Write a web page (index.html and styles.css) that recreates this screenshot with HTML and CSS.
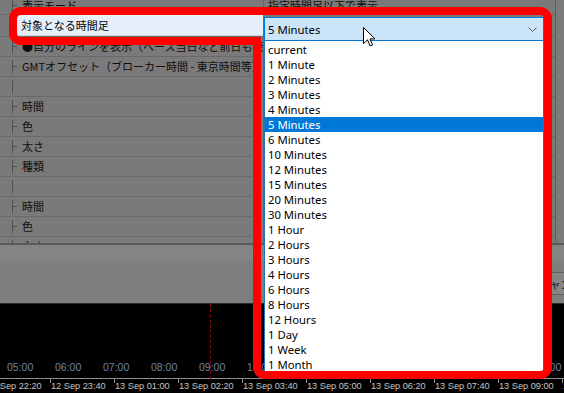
FILE: index.html
```html
<!DOCTYPE html>
<html lang="ja">
<head>
<meta charset="utf-8">
<title>時間足設定</title>
<link rel="stylesheet" href="styles.css">
</head>
<body>
<div class="screen">
  <section class="dialog">
    <div class="grid-area">
      <div class="grid">
        <div class="row row-head">
          <div class="cell-name tee">表示モード</div>
          <div class="cell-value">指定時間足以下で表示</div>
        </div>
        <div class="row row-focus">
          <div class="cell-name"><div class="spot">対象となる時間足</div></div>
          <div class="cell-value"></div>
        </div>
        <div class="row">
          <div class="cell-name tee">●自分のラインを表示（ベース当日など前日も表示）</div>
          <div class="cell-value"></div>
        </div>
        <div class="row">
          <div class="cell-name tee">GMTオフセット（ブローカー時間 - 東京時間等）</div>
          <div class="cell-value"></div>
        </div>
        <div class="row"><div class="cell-name pipe"></div><div class="cell-value"></div></div>
        <div class="row"><div class="cell-name tee">時間</div><div class="cell-value"></div></div>
        <div class="row"><div class="cell-name tee">色</div><div class="cell-value"></div></div>
        <div class="row"><div class="cell-name tee">太さ</div><div class="cell-value"></div></div>
        <div class="row"><div class="cell-name tee">種類</div><div class="cell-value"></div></div>
        <div class="row"><div class="cell-name pipe"></div><div class="cell-value"></div></div>
        <div class="row"><div class="cell-name tee">時間</div><div class="cell-value"></div></div>
        <div class="row"><div class="cell-name tee">色</div><div class="cell-value"></div></div>
        <div class="row"><div class="cell-name tee">太さ</div><div class="cell-value"></div></div>
      </div>
      <div class="scroll"></div>
    </div>
    <div class="footer">
      <button class="btn" type="button">キャンセル</button>
    </div>
  </section>

  <section class="chart">
    <div class="marker"></div>
    <div class="hours">
      <span>05:00</span><span>06:00</span><span>07:00</span><span>08:00</span>
      <span>09:00</span><span>10:00</span><span>11:00</span><span>12:00</span>
      <span>13:00</span><span>14:00</span><span>15:00</span><span>16:00</span>
    </div>
    <div class="axis">
      <span>12 Sep 22:20</span><span>12 Sep 23:40</span><span>13 Sep 01:00</span>
      <span>13 Sep 02:20</span><span>13 Sep 03:40</span><span>13 Sep 05:00</span>
      <span>13 Sep 06:20</span><span>13 Sep 07:40</span><span>13 Sep 09:00</span>
      <span>13 Sep 10:20</span>
    </div>
  </section>

  <div class="combo">
    <div class="combo-field">
      <span>5 Minutes</span>
      <svg class="chevron" width="9" height="5" viewBox="0 0 9 5"><polyline points="0.5,0.5 4.5,4.5 8.5,0.5" fill="none" stroke="#5a5a5a" stroke-width="1"/></svg>
    </div>
    <ul class="combo-list">
      <li>current</li>
      <li>1 Minute</li>
      <li>2 Minutes</li>
      <li>3 Minutes</li>
      <li>4 Minutes</li>
      <li class="selected">5 Minutes</li>
      <li>6 Minutes</li>
      <li>10 Minutes</li>
      <li>12 Minutes</li>
      <li>15 Minutes</li>
      <li>20 Minutes</li>
      <li>30 Minutes</li>
      <li>1 Hour</li>
      <li>2 Hours</li>
      <li>3 Hours</li>
      <li>4 Hours</li>
      <li>6 Hours</li>
      <li>8 Hours</li>
      <li>12 Hours</li>
      <li>1 Day</li>
      <li>1 Week</li>
      <li>1 Month</li>
    </ul>
  </div>

  <svg class="frame" width="564" height="393" viewBox="0 0 564 393">
    <path d="M13 19 A8 8 0 0 1 21 11 L540 11 A8 8 0 0 1 548 19 L548 367 A8 8 0 0 1 540 375 L265 375 A8 8 0 0 1 257 367 L257 41 L21 41 A8 8 0 0 1 13 33 Z" fill="none" stroke="#ff0000" stroke-width="8" stroke-linejoin="miter"/>
  </svg>

  <svg class="cursor" width="13" height="21" viewBox="0 0 13 21">
    <path d="M0.5 0.5 L0.5 16.5 L4.5 12.8 L7.2 19 L9.6 18 L7 11.9 L12 11.9 Z" fill="#ffffff" stroke="#000000" stroke-width="1" stroke-linejoin="miter"/>
  </svg>
</div>
</body>
</html>
```
FILE: styles.css
```css
* { box-sizing: border-box; }

html, body {
  margin: 0;
  padding: 0;
  background: #000;
}

.screen {
  width: 564px;
  height: 393px;
  position: relative;
  overflow: hidden;
}

/* ---------- dimmed dialog ---------- */
.dialog {
  height: 303px;
  display: flex;
  flex-direction: column;
  background: #7e7e7e;
}

.grid-area {
  height: 245px;
  flex: none;
  display: flex;
  overflow: hidden;
  background: #7a7a7a;
  border-bottom: 2px solid #5a5a5a;
}

.grid {
  width: 556px;
  flex: none;
  margin-top: -3px;
  border-right: 1px solid #5e5e5e;
}

.scroll {
  flex: 1;
  background: #7c7c7c;
}

.row {
  display: flex;
  height: 20px;
  border-bottom: 1px solid #6a6a6a;
  font-family: "Noto Sans CJK JP", sans-serif;
  font-size: 11px;
  line-height: 19px;
  color: #0e0e0e;
}

.row-head { height: 18px; line-height: 17px; }
.row-focus { height: 22px; line-height: 21px; }

.cell-name {
  width: 264px;
  flex: none;
  position: relative;
  padding-left: 22px;
  white-space: nowrap;
  overflow: hidden;
  border-right: 1px solid #6a6a6a;
}

.cell-value {
  flex: 1;
  padding-left: 4px;
  white-space: nowrap;
  overflow: hidden;
}

.tee::before,
.pipe::before {
  content: "";
  position: absolute;
  left: 12px;
  top: 3px;
  height: 13px;
  border-left: 1px solid #4e5258;
}

.tee::after {
  content: "";
  position: absolute;
  left: 12px;
  top: 9px;
  width: 5px;
  border-top: 1px solid #4e5258;
}

.row-head .tee::before { top: 2px; }
.row-head .tee::after { top: 8px; }

.row-focus .cell-name { padding-left: 0; }

.spot {
  margin-left: 16px;
  height: 100%;
  padding-left: 5px;
  background: #e5effa;
  border-bottom: 1px solid #c9d6e3;
  color: #000;
}

.footer {
  flex: 1;
  display: flex;
  justify-content: flex-end;
  align-items: flex-start;
  padding-top: 27px;
  background: linear-gradient(#848484 0, #848484 16px, #7e7e7e 16px);
}

.btn {
  width: 76px;
  height: 23px;
  margin: 0 -40px 0 0;
  padding: 0;
  border: 1px solid #626262;
  background: #858585;
  color: #141414;
  font-family: "Noto Sans CJK JP", sans-serif;
  font-size: 11px;
  line-height: 20px;
}

/* ---------- chart ---------- */
.chart {
  height: 90px;
  position: relative;
  display: flex;
  flex-direction: column;
  background: #000;
  border-top: 1px solid #2a2a2a;
}

.marker {
  position: absolute;
  left: 210px;
  top: 0;
  height: 75px;
  border-left: 1px dashed #8a0b0b;
}

.hours {
  display: flex;
  margin-top: 57px;
  margin-left: 7px;
  height: 13px;
  font-family: "Liberation Sans", Arial, sans-serif;
  font-size: 10.5px;
  line-height: 13px;
  color: #7186a6;
}

.hours span {
  width: 48px;
  flex: none;
}

.axis {
  display: flex;
  margin-top: 4px;
  margin-left: -14px;
  height: 14px;
  border-top: 1px solid #8e8e8e;
}

.axis span {
  width: 64px;
  flex: none;
  position: relative;
  padding: 2px 0 0 1px;
  font-family: "Liberation Sans", Arial, sans-serif;
  font-size: 9.2px;
  line-height: 11px;
  color: #c6c6c6;
  white-space: nowrap;
}

.axis span::before {
  content: "";
  position: absolute;
  left: 0;
  top: 0;
  height: 4px;
  border-left: 1px solid #8e8e8e;
}

/* ---------- open combobox (popup) ---------- */
.combo {
  position: absolute;
  left: 264px;
  top: 17px;
  width: 280px;
  font-family: "Noto Sans", sans-serif;
  font-size: 11.3px;
  color: #000;
}

.combo-field {
  height: 24px;
  display: flex;
  align-items: center;
  justify-content: space-between;
  padding: 0 6px 0 3px;
  background: #cce4f7;
  border: 1px solid #0078d7;
  line-height: 15px;
}

.chevron { display: block; margin-top: 1px; }

.combo-list {
  list-style: none;
  margin: 0;
  padding: 1px 0 0 0;
  background: #fff;
  border: 1px solid #2a70c2;
  border-top: none;
}

.combo-list li {
  height: 15px;
  line-height: 15px;
  padding-left: 3px;
  white-space: nowrap;
}

.combo-list li.selected {
  background: #0078d7;
  color: #fff;
}

/* ---------- overlays ---------- */
.frame {
  position: absolute;
  left: 0;
  top: 0;
  pointer-events: none;
}

.cursor {
  position: absolute;
  left: 363px;
  top: 27px;
  pointer-events: none;
}
```
